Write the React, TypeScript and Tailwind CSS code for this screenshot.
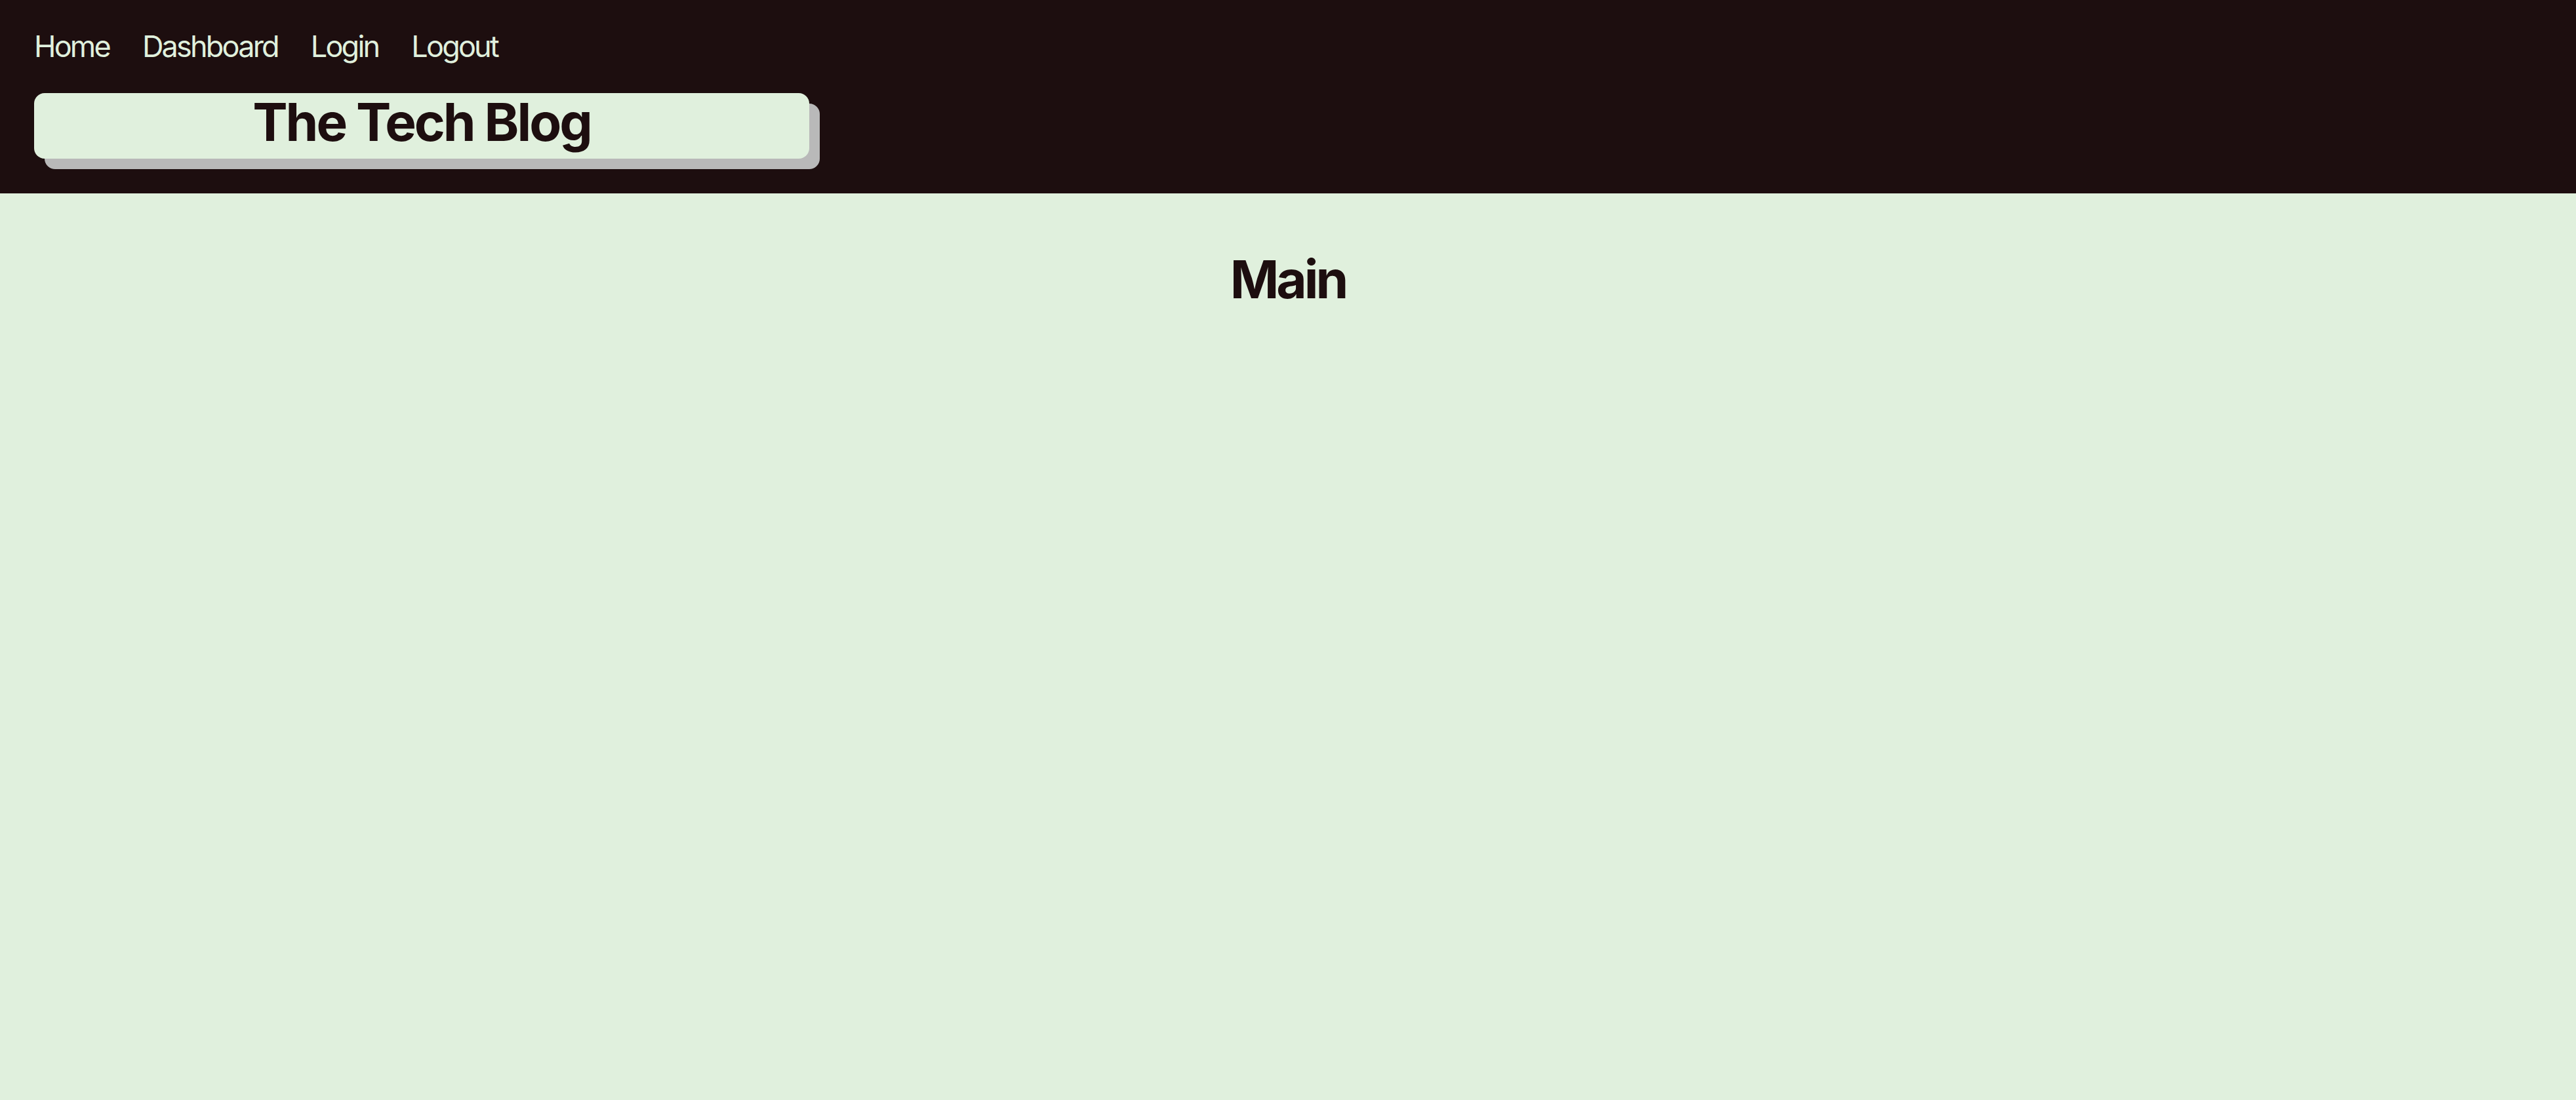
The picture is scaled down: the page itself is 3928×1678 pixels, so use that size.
export default function App() {
  const links = ["Home", "Dashboard", "Login", "Logout"]

  return (
    <div className="min-h-screen flex flex-col bg-[#e0f0dd] font-['Inter',sans-serif]">
      <header className="bg-[#1d0e0f] px-[52px] pt-[44px] pb-[53px]">
        <nav className="flex gap-[50px] text-[45px] leading-[54px] text-[#e0f0dd]">
          {links.map((l) => (
            <a key={l} href="#" className="tracking-[-2.8px]">
              {l}
            </a>
          ))}
        </nav>
        <div className="mt-[44px] w-[1182px] h-[100px] rounded-2xl bg-[#e0f0dd] shadow-[16px_16px_0_#b9b9b9] flex justify-center">
          <h1 className="mt-[4px] text-[80px] leading-[80px] font-bold text-[#1d0e0f] tracking-[-3px]">
            The Tech Blog
          </h1>
        </div>
      </header>
      <main className="flex-1 pt-[82px]">
        <h1 className="text-center text-[80px] leading-[97px] font-bold text-[#1d0e0f] tracking-[-4px]">
          Main
        </h1>
      </main>
    </div>
  )
}
